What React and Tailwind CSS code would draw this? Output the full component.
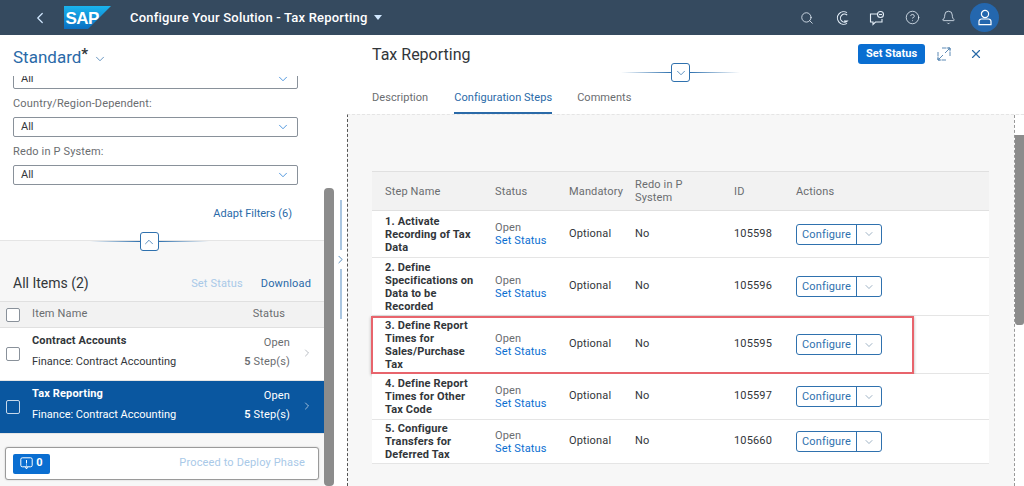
import React from "react";
import { Search, CircleHelp, Bell, ChevronLeft, ChevronDown, ChevronUp, ChevronRight, X } from "lucide-react";

const font = { fontFamily: 'Roboto, "Noto Sans", sans-serif' };

const steps = [
  { name: ["1. Activate", "Recording of Tax", "Data"], id: "105598", h: "h-[47px]" },
  { name: ["2. Define", "Specifications on", "Data to be", "Recorded"], id: "105596", h: "h-[58px]" },
  { name: ["3. Define Report", "Times for", "Sales/Purchase", "Tax"], id: "105595", h: "h-[58px]", marked: true },
  { name: ["4. Define Report", "Times for Other", "Tax Code"], id: "105597", h: "h-[46px]" },
  { name: ["5. Configure", "Transfers for", "Deferred Tax"], id: "105660", h: "h-[44px]" },
];

const SapLogo = () => (
  <svg width="48" height="24" viewBox="0 0 48 24">
    <defs>
      <linearGradient id="sapBlue" x1="0" y1="0" x2="0" y2="1">
        <stop offset="0" stopColor="#1ab4ee" />
        <stop offset="1" stopColor="#0a6fc2" />
      </linearGradient>
    </defs>
    <polygon points="0,0 47,0 24,23 0,23" fill="url(#sapBlue)" />
    <text x="1.5" y="18" fontSize="17" fontWeight="800" fill="#fff" fontFamily="Liberation Sans, sans-serif" letterSpacing="-0.6">
      SAP
    </text>
  </svg>
);

const Select = ({ className = "" }) => (
  <div className={"flex items-center justify-between h-[20px] border border-[#89919a] rounded-[2px] pl-[7px] pr-[7px] bg-white text-[11px] text-[#32363a] " + className}>
    <span>All</span>
    <ChevronDown size={14} strokeWidth={1.2} className="text-[#0a6ed1]" />
  </div>
);

const Collapse = ({ up }) => (
  <div className="flex items-center justify-center">
    <div className="h-[1px] w-[50px] bg-gradient-to-r from-transparent to-[#2f71ae]" />
    <div className="w-[19px] h-[19px] border border-[#2f71ae] rounded-[3px] bg-white flex items-center justify-center text-[#2f71ae]">
      {up ? <ChevronUp size={14} strokeWidth={1.3} /> : <ChevronDown size={14} strokeWidth={1.3} />}
    </div>
    <div className="h-[1px] w-[50px] bg-gradient-to-l from-transparent to-[#2f71ae]" />
  </div>
);

const ItemRow = ({ name, selected }) => (
  <div className={"flex items-center h-[53px] pl-[6px] border-b border-[#e5e5e5] " + (selected ? "bg-[#0a57a0] text-white" : "bg-white text-[#32363a]")}>
    <div className={"w-[14px] h-[14px] border rounded-[2px] " + (selected ? "border-[#c7d8ea]" : "border-[#89919a] bg-white")} />
    <div className="flex-1 pl-[12px] -mt-[6px]">
      <div className="text-[11px] tracking-[0.15px] font-bold leading-[14px]">{name}</div>
      <div className="text-[11px] leading-[14px] mt-[7px]">Finance: Contract Accounting</div>
    </div>
    <div className={"text-right text-[11px] tracking-[0.15px] leading-[14px] -mt-[3px] " + (selected ? "text-white" : "text-[#6a6d70]")}>
      <div>Open</div>
      <div className="mt-[5px]"><span className="font-semibold">5</span> Step(s)</div>
    </div>
    <ChevronRight size={12} strokeWidth={1.2} className={"mx-[11px] -mt-[2px] " + (selected ? "text-white" : "text-[#89919a]")} />
  </div>
);

const StepRow = ({ step }) => (
  <div className={"relative grid grid-cols-[123px_74px_66px_99px_62px_1fr] items-center bg-white border-b border-[#e5e5e5] text-[11px] tracking-[0.15px] text-[#32363a] " + step.h}>
    <div className="pl-[13px] pr-[2px] font-bold leading-[13px] whitespace-nowrap">
      {step.name.map((line) => (
        <div key={line}>{line}</div>
      ))}
    </div>
    <div className="leading-[13px]">
      <div className="text-[#6a6d70]">Open</div>
      <div className="text-[#0a6ed1]">Set Status</div>
    </div>
    <div>Optional</div>
    <div>No</div>
    <div>{step.id}</div>
    <div className="flex items-center h-[21px] w-[86px] border border-[#2f71ae] rounded-[3px] text-[#2f71ae]">
      <span className="w-[60px] text-center border-r border-[#2f71ae] leading-[19px]">Configure</span>
      <span className="flex-1 flex justify-center text-[#5d7d9c]">
        <ChevronDown size={12} strokeWidth={1.2} />
      </span>
    </div>
    {step.marked && (
      <div className="absolute left-[-1px] top-0 w-[543px] h-[58px] border-2 border-[#e8646c] shadow-[0_1px_3px_rgba(0,0,0,0.3)] pointer-events-none" />
    )}
  </div>
);

export default function App() {
  return (
    <div className="w-[1024px] h-[486px] flex flex-col overflow-hidden bg-white" style={font}>
      {/* shell bar */}
      <header className="h-[35px] shrink-0 bg-[#354a5f] flex items-center text-white">
        <ChevronLeft size={18} strokeWidth={1.6} className="ml-[31px] text-[#d1e8ff]" />
        <div className="ml-[15px] mt-[1px]"><SapLogo /></div>
        <span className="ml-[18px] text-[13px] font-medium tracking-[0.2px]">Configure Your Solution - Tax Reporting</span>
        <span className="ml-[6px] w-0 h-0 border-x-[4px] border-x-transparent border-t-[5px] border-t-[#d1e8ff]" />
        <div className="ml-auto flex items-center text-[#e4eef8]">
          <Search size={14} strokeWidth={1.4} className="mr-[21px]" />
          <svg width="14" height="16" viewBox="0 0 14 16" fill="none" stroke="currentColor" strokeWidth="1.1" className="mr-[20px]">
            <path d="M12 2.6A6.3 6.3 0 1 0 12 13.4" />
            <path d="M12.2 5.2A4 4 0 1 0 12.2 11H9" />
          </svg>
          <svg width="16" height="16" viewBox="0 0 16 16" fill="none" stroke="currentColor" strokeWidth="1.1" className="mr-[20px]">
            <path d="M8 4H1.5v8H4v2.5L6.5 12H13V9" />
            <circle cx="11.5" cy="4.5" r="3" />
            <path d="M10 4.5h3" />
          </svg>
          <CircleHelp size={15} strokeWidth={1.3} className="mr-[21px]" />
          <Bell size={15} strokeWidth={1.3} className="mr-[14px]" />
          <div className="w-[29px] h-[29px] rounded-full bg-[#2467ae] flex items-center justify-center mr-[25px]">
            <svg width="14" height="17" viewBox="0 0 14 17" fill="none" stroke="#fff" strokeWidth="1.2">
              <circle cx="7" cy="5" r="3.6" />
              <path d="M1 15.6V12.5a2.5 2.5 0 0 1 2.5-2.5h7a2.5 2.5 0 0 1 2.5 2.5v3.1z" />
            </svg>
          </div>
        </div>
      </header>

      <div className="flex-1 flex min-h-0">
        {/* left column */}
        <aside className="w-[324px] shrink-0 flex flex-col">
          <div className="h-[41px] shrink-0 pl-[13px] pt-[3px] flex items-center text-[#2a6aa8]">
            <span className="text-[17px] leading-[22px]">Standard</span>
            <span className="text-[15px] leading-[18px] text-[#32363a] font-bold self-start mt-[7px]">*</span>
            <ChevronDown size={14} strokeWidth={1.2} className="ml-[5px] mt-[3px]" />
          </div>
          <div className="h-[165px] shrink-0 overflow-hidden pl-[13px] pr-[26px] border-b border-[#e5e5e5]">
            <Select className="-mt-[7px]" />
            <div className="text-[11px] tracking-[0.15px] text-[#6a6d70] mt-[8px] leading-[14px]">Country/Region-Dependent:</div>
            <Select className="mt-[6px]" />
            <div className="text-[11px] tracking-[0.15px] text-[#6a6d70] mt-[8px] leading-[14px]">Redo in P System:</div>
            <Select className="mt-[6px]" />
            <div className="text-right text-[11px] text-[#2a6aa8] mt-[22px] pr-[6px] leading-[14px]">Adapt Filters (6)</div>
          </div>
          <div className="-mt-[9px] h-[19px] w-[298px] shrink-0 relative z-10">
            <Collapse up />
          </div>
          <div className="flex-1 -mt-[10px] bg-[#f7f7f7] flex flex-col min-h-0">
            <div className="h-[60px] shrink-0 flex items-end pb-[9px] pl-[13px] pr-[13px]">
              <span className="text-[14px] text-[#32363a] leading-[18px]">All Items (2)</span>
              <span className="ml-auto text-[11px] tracking-[0.15px] text-[#a9c9e8] leading-[16px]">Set Status</span>
              <span className="ml-[18px] text-[11px] tracking-[0.15px] text-[#2a6aa8] leading-[16px]">Download</span>
            </div>
            <div className="h-[27px] shrink-0 flex items-center bg-[#f2f2f2] border-y border-[#e0e0e0] pl-[6px] pr-[39px] text-[11px] tracking-[0.15px] text-[#6a6d70]">
              <div className="w-[14px] h-[14px] border border-[#89919a] rounded-[2px] bg-white" />
              <span className="pl-[12px]">Item Name</span>
              <span className="ml-auto">Status</span>
            </div>
            <ItemRow name="Contract Accounts" />
            <ItemRow name="Tax Reporting" selected />
            <div className="flex-1 flex items-start pt-[13px] pl-[5px] pr-[5px]">
              <div className="w-full h-[33px] flex items-center bg-white border border-[#9a9a9a] rounded-[3px] pl-[7px] pr-[13px] shadow-[0_0_2px_rgba(0,0,0,0.2)]">
                <div className="w-[37px] h-[20px] rounded-[2px] bg-[#0a6ed1] flex items-center justify-center gap-[3px] text-white text-[11px] font-bold">
                  <svg width="13" height="13" viewBox="0 0 13 13" fill="none" stroke="#fff" strokeWidth="1">
                    <rect x="0.8" y="0.8" width="11.4" height="9" rx="1.5" />
                    <path d="M6.5 3v3.5M6.5 7.5v1M5.5 10l1 2 1-2" />
                  </svg>
                  0
                </div>
                <span className="ml-auto text-[11px] tracking-[0.15px] text-[#a9c9e8]">Proceed to Deploy Phase</span>
              </div>
            </div>
          </div>
        </aside>

        {/* scrollbar of the left column */}
        <div className="w-[10px] shrink-0 bg-white flex flex-col">
          <div className="mt-[153px] h-[298px] bg-[#8c8c8c] rounded-[4px]" />
        </div>

        {/* splitter */}
        <div className="w-[13px] shrink-0 flex flex-col items-center">
          <div className="mt-[165px] h-[50px] w-[2px] bg-[#a9c5e0]" />
          <ChevronRight size={13} strokeWidth={1.5} className="text-[#2f71ae] my-[3px]" />
          <div className="h-[50px] w-[2px] bg-[#a9c5e0]" />
        </div>

        {/* right column */}
        <main className="flex-1 flex flex-col min-w-0">
          <div className="h-[79px] shrink-0 pl-[25px] pr-[41px] relative">
            <div className="flex items-start pt-[9px]">
              <span className="text-[16px] text-[#32363a] leading-[20px] mt-[1px]">Tax Reporting</span>
              <span className="ml-auto h-[20px] w-[67px] rounded-[3px] bg-[#0a6ed1] text-white text-[11px] font-bold flex items-center justify-center">Set Status</span>
              <svg width="14" height="14" viewBox="0 0 14 14" fill="none" stroke="#5d8ab5" strokeWidth="1" className="ml-[12px] mt-[3px]">
                <path d="M1 5V13H9M5 1H13V9" strokeDasharray="4 2" />
                <path d="M8 6L13 1M9.5 1H13V4.5M6 8L1 13M1 9.5V13H4.5" />
              </svg>
              <X size={14} strokeWidth={2} className="ml-[18px] mt-[3px] text-[#2a6aa8]" />
            </div>
            <div className="absolute left-[274px] top-[28px]">
              <Collapse />
            </div>
            <div className="absolute left-[25px] bottom-0 flex text-[11px] tracking-[0.05px] text-[#6a6d70]">
              <span className="h-[28px] pt-[4px]">Description</span>
              <span className="ml-[26px] h-[28px] pt-[4px] text-[#2a6aa8] border-b-2 border-[#2a6aa8]">Configuration Steps</span>
              <span className="ml-[25px] h-[28px] pt-[4px]">Comments</span>
            </div>
          </div>
          <div className="flex-1 flex bg-[#f7f7f7] border-t border-[#e5e5e5] border-l border-l-[#555] border-dashed min-h-0">
            <div className="flex-1 pl-[24px] pr-[24px] pt-[56px]">
              <div className="w-[617px]">
                <div className="h-[40px] grid grid-cols-[123px_74px_66px_99px_62px_1fr] items-center bg-[#f2f2f2] border-y border-[#e0e0e0] text-[11px] tracking-[0.15px] text-[#6a6d70] leading-[13px]">
                  <div className="pl-[13px]">Step Name</div>
                  <div>Status</div>
                  <div>Mandatory</div>
                  <div>
                    <div>Redo in P</div>
                    <div>System</div>
                  </div>
                  <div>ID</div>
                  <div>Actions</div>
                </div>
                {steps.map((step) => (
                  <StepRow key={step.id} step={step} />
                ))}
              </div>
            </div>
            <div className="w-[10px] shrink-0 ml-[-9px] border-l border-dashed border-[#999] bg-white">
              <div className="mt-[20px] h-[190px] bg-[#8c8c8c] rounded-b-[3px]" />
            </div>
          </div>
        </main>
      </div>
    </div>
  );
}
